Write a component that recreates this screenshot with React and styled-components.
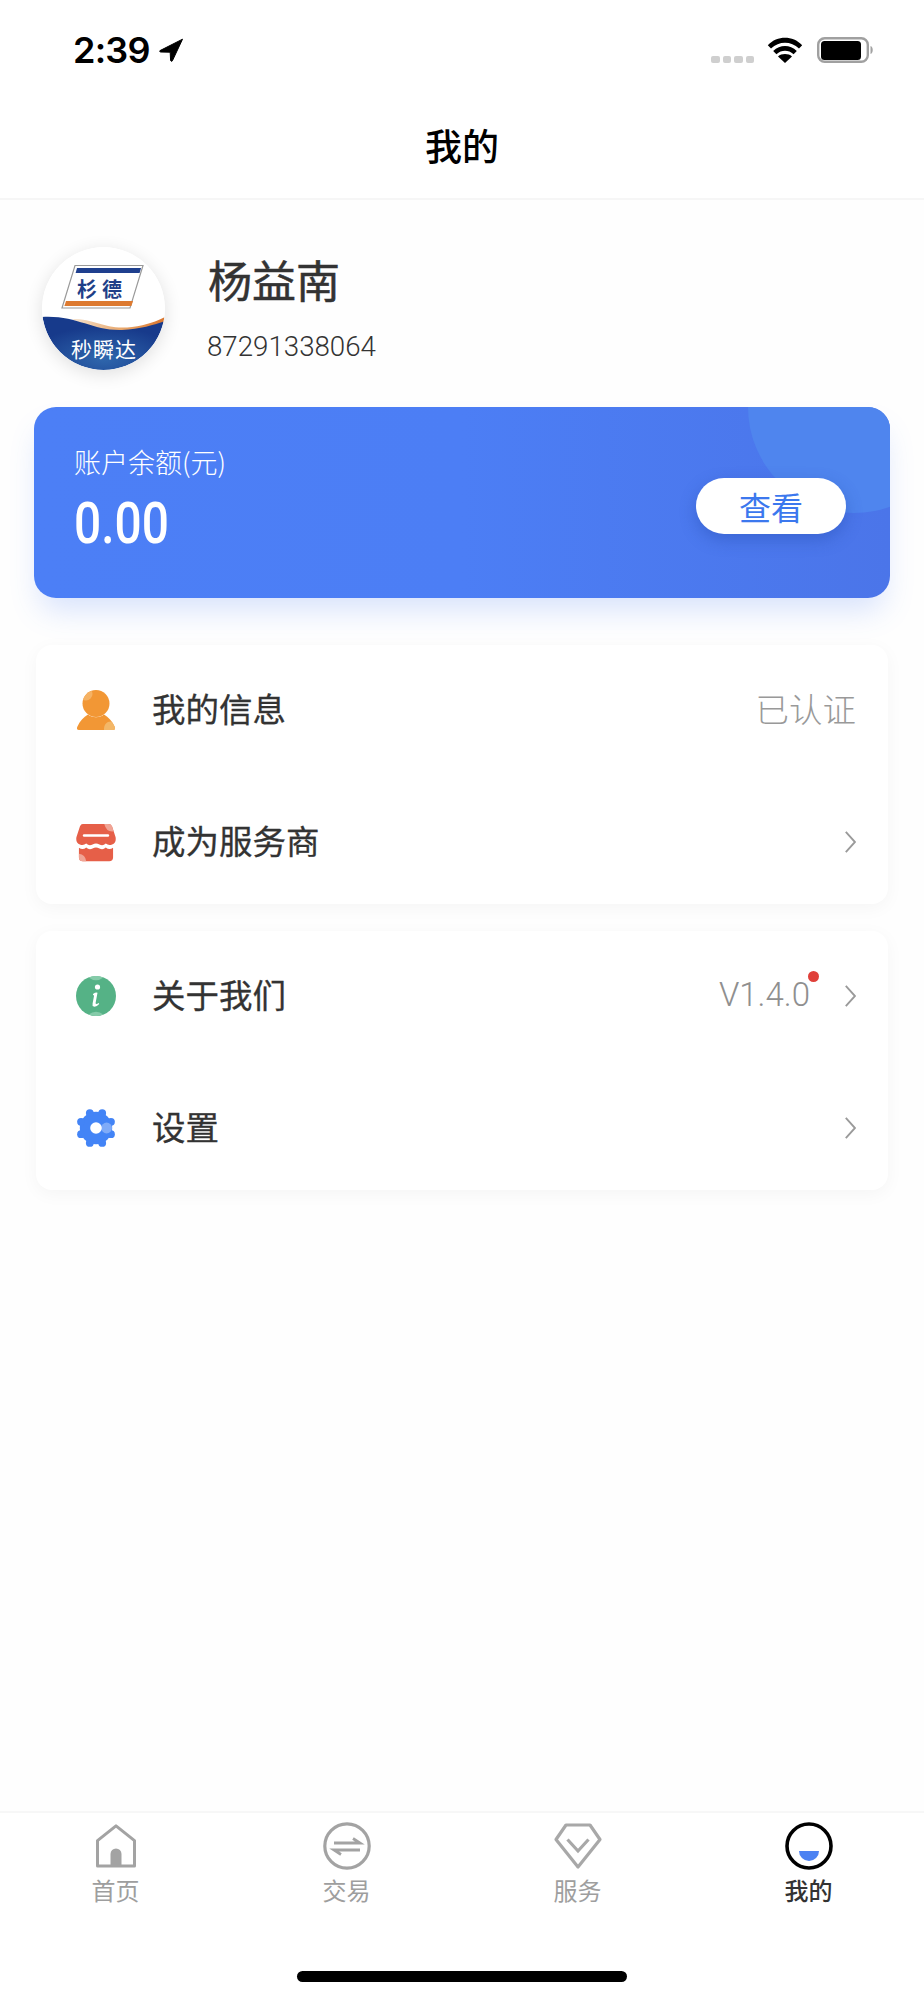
import React from "react";
import styled, { createGlobalStyle } from "styled-components";

const Global = createGlobalStyle`
  html, body { margin: 0; padding: 0; background: #fff; }
  * { box-sizing: border-box; }
  body { font-family: "Noto Sans CJK SC", "Noto Sans", sans-serif; }
`;

const CJK = `"Noto Sans CJK SC", "Noto Sans", sans-serif`;

const Page = styled.div`
  width: 924px;
  height: 2000px;
  display: flex;
  flex-direction: column;
  background: #fff;
  overflow: hidden;
`;
const StatusBar = styled.div`
  height: 94px;
  padding: 37px 49px 0 73px;
  display: flex;
  justify-content: space-between;
  align-items: flex-start;
`;
const TimeGroup = styled.div`
  display: flex;
  align-items: center;
  gap: 9px;
  height: 26px;
`;
const Time = styled.span`
  font-family: "Inter", sans-serif;
  font-weight: 600;
  font-size: 36px;
  line-height: 26px;
  letter-spacing: -0.8px;
  color: #000;
`;
const StatusIcons = styled.div`
  display: flex;
  align-items: flex-start;
`;
const SignalDots = styled.div`
  display: flex;
  gap: 3px;
  margin: 19px 13px 0 0;
`;
const SignalDot = styled.i`
  width: 8.5px;
  height: 7px;
  border-radius: 2px;
  background: #cfcfcf;
`;
const NavBar = styled.header`
  height: 106px;
  padding-bottom: 2px;
  display: flex;
  align-items: center;
  justify-content: center;
  border-bottom: 2px solid #f6f6f6;
  font-family: ${CJK};
  font-size: 37px;
  font-weight: 500;
  color: #000;
`;
const Main = styled.main`
  flex: 1;
  padding: 47px 34px 0;
  background: #fefefe;
`;
const Profile = styled.section`
  display: flex;
  align-items: center;
  gap: 43px;
  padding-left: 8px;
`;
const Avatar = styled.div`
  width: 123px;
  height: 123px;
  border-radius: 50%;
  background: #fff;
  box-shadow: 0 4px 18px rgba(0, 0, 0, 0.12);
  overflow: hidden;
  flex: none;
`;
const ProfileText = styled.div`
  display: flex;
  flex-direction: column;
  gap: 24px;
  padding-bottom: 3px;
`;
const Name = styled.div`
  font-family: ${CJK};
  font-size: 44px;
  line-height: 56px;
  font-weight: 400;
  color: #333;
  height: 56px;
  -webkit-text-stroke: 0.5px #333;
`;
const Phone = styled.div`
  font-family: "Roboto", sans-serif;
  font-size: 27.7px;
  line-height: 32px;
  font-weight: 300;
  color: #333;
  margin-left: -1px;
`;
const BalanceCard = styled.section`
  position: relative;
  margin-top: 37px;
  height: 191px;
  border-radius: 22px;
  padding: 38px 44px 0 40px;
  display: flex;
  justify-content: space-between;
  background: linear-gradient(90deg, #4c7ff6 0%, #4c7ef5 50%, #4b75e9 100%);
  box-shadow: 0 18px 30px -6px rgba(76, 126, 245, 0.22);
`;
const CardDecor = styled.div`
  position: absolute;
  inset: 0;
  border-radius: 22px;
  overflow: hidden;
  &::after {
    content: "";
    position: absolute;
    width: 212px;
    height: 212px;
    border-radius: 50%;
    left: 714px;
    top: -106px;
    background: #4f85ee;
  }
`;
const BalanceText = styled.div`
  position: relative;
  display: flex;
  flex-direction: column;
`;
const BalanceLabel = styled.div`
  font-family: ${CJK};
  font-size: 27px;
  line-height: 34px;
  font-weight: 300;
  color: #fff;
`;
const BalanceValue = styled.div`
  margin-top: 15px;
  font-family: "Roboto", sans-serif;
  font-size: 57px;
  line-height: 60px;
  font-weight: 500;
  color: #fff;
  transform: scaleX(0.84);
  transform-origin: left center;
`;
const ViewButton = styled.button`
  position: relative;
  align-self: flex-start;
  margin-top: 33px;
  width: 150px;
  height: 56px;
  border: 0;
  border-radius: 28px;
  padding: 0;
  background: #fff;
  color: #3c78ee;
  font-family: ${CJK};
  font-size: 32px;
  font-weight: 400;
  box-shadow: 0 6px 16px rgba(40, 80, 180, 0.45);
`;
const Group = styled.section`
  margin: ${(p) => p.$top}px 2px 0;
  display: flex;
  flex-direction: column;
  background: #fff;
  border-radius: 16px;
  box-shadow: 0 4px 18px rgba(0, 0, 0, 0.04);
`;
const Row = styled.div`
  height: ${(p) => (p.$last ? 129 : 130)}px;
  padding: ${(p) => (p.$last ? "5px" : "0")} 32px 0 40px;
  display: flex;
  align-items: center;
`;
const RowIcon = styled.div`
  width: 40px;
  height: 44px;
  display: flex;
  align-items: center;
  justify-content: center;
  flex: none;
`;
const RowLabel = styled.div`
  flex: 1;
  margin-left: 36px;
  padding-bottom: 5px;
  font-family: ${CJK};
  font-size: 33.5px;
  font-weight: 400;
  color: #333;
  -webkit-text-stroke: 0.3px #333;
`;
const RowValue = styled.div`
  font-family: ${CJK};
  font-size: 33.5px;
  font-weight: 300;
  padding-bottom: 5px;
  color: #999;
`;
const Version = styled.div`
  position: relative;
  margin-right: 35px;
  padding-bottom: 3px;
  font-family: "Roboto", sans-serif;
  font-size: 33px;
  font-weight: 300;
  color: #8f8f8f;
`;
const RedDot = styled.i`
  position: absolute;
  width: 11px;
  height: 11px;
  border-radius: 50%;
  background: #e0403a;
  right: -9px;
  top: -4px;
`;
const TabBar = styled.nav`
  height: 189px;
  flex: none;
  background: #fff;
  border-top: 2px solid #f7f7f7;
  padding-top: 9px;
  display: flex;
  flex-direction: column;
  align-items: center;
`;
const Tabs = styled.div`
  width: 100%;
  display: grid;
  grid-template-columns: repeat(4, 1fr);
`;
const Tab = styled.div`
  display: flex;
  flex-direction: column;
  align-items: center;
  gap: 5px;
  font-family: ${CJK};
  font-size: 24px;
  line-height: 30px;
  font-weight: ${(p) => (p.$active ? 500 : 400)};
  color: ${(p) => (p.$active ? "#333" : "#9e9e9e")};
`;
const HomeBar = styled.div`
  width: 330px;
  height: 11px;
  margin-top: 66px;
  border-radius: 6px;
  background: #000;
`;

const LocationIcon = () => (
  <svg width="24" height="24" viewBox="0 0 24 24">
    <path d="M23.5 1.2 L1 12.6 Q0 13.6 1.6 14 L11.2 14.2 L11.6 22.6 Q12.4 24 13.4 22.8 Z" fill="#000" stroke="#000" strokeWidth="1" strokeLinejoin="round" />
  </svg>
);
const WifiIcon = () => (
  <svg width="36" height="26" viewBox="0 0 36 26" style={{ marginRight: 14 }}>
    <path d="M0.8 8.2 C10.5 -1.6 25.5 -1.6 35.2 8.2 L32 11.6 C24 3.8 12 3.8 4 11.6 Z" fill="#000" />
    <path d="M6.2 14 C13 7.4 23 7.4 29.8 14 L26.6 17.2 C21.4 12.6 14.6 12.6 9.4 17.2 Z" fill="#000" />
    <path d="M18 26 L11 19.4 C14.6 16.2 21.4 16.2 25 19.4 Z" fill="#000" />
  </svg>
);
const BatteryIcon = () => (
  <svg width="58" height="26" viewBox="0 0 58 26">
    <rect x="1.2" y="1.2" width="49.6" height="23.6" rx="6.5" fill="none" stroke="#a0a0a0" strokeWidth="2.4" />
    <rect x="4" y="4" width="40" height="19" rx="3.5" fill="#000" />
    <path d="M53.5 9 C56.5 10 56.5 16 53.5 17 Z" fill="#a2a2a2" />
  </svg>
);

const LogoAvatar = () => (
  <svg width="123" height="123" viewBox="0 0 123 123">
    <defs>
      <radialGradient id="wave" cx="50%" cy="78%" r="60%">
        <stop offset="0%" stopColor="#2f67ad" />
        <stop offset="100%" stopColor="#173a8b" />
      </radialGradient>
      <linearGradient id="stripe" x1="0" x2="1">
        <stop offset="0%" stopColor="#f5e3cf" />
        <stop offset="55%" stopColor="#e8a568" />
        <stop offset="100%" stopColor="#d9752d" />
      </linearGradient>
      <clipPath id="disc">
        <circle cx="61.5" cy="61.5" r="61.5" />
      </clipPath>
    </defs>
    <g clipPath="url(#disc)">
      <rect width="123" height="123" fill="#fff" />
      <path d="M33 18.5 H101 L88 61 H20 Z" fill="#fff" stroke="#9a9a9a" strokeWidth="1.2" />
      <path d="M35 21 H99 L97.6 26 H33.6 Z" fill="#1f3f8e" />
      <path d="M24 54 H91 L89.4 59 H22.4 Z" fill="#dd7a30" />
      <text x="60" y="50" textAnchor="middle" fontFamily={CJK} fontSize="20" fontWeight="700" letterSpacing="5" fill="#1f3f88">杉德</text>
      <path d="M30 72 C55 72 62 83 90 80 C105 78 115 74 123 70 V76 C100 88 60 90 30 72 Z" fill="url(#stripe)" />
      <path d="M0 70 C35 68 50 84 80 83 C98 82 112 78 123 74 V123 H0 Z" fill="url(#wave)" />
      <text x="62" y="110" textAnchor="middle" fontFamily={CJK} fontSize="21" fontWeight="400" letterSpacing="1" fill="#fff">秒瞬达</text>
    </g>
  </svg>
);

const PersonIcon = () => (
  <svg width="40" height="42" viewBox="0 0 40 42">
    <defs>
      <clipPath id="head">
        <circle cx="20" cy="14.5" r="13.5" />
      </clipPath>
    </defs>
    <circle cx="20" cy="14.5" r="13.5" fill="#f29735" />
    <circle cx="10" cy="5" r="6.5" fill="#f5b264" clipPath="url(#head)" />
    <path d="M1.2 38 C4 32 7.5 28 12 25.5 C16 29 24 29 28 25.5 C32.5 28 36 32 38.8 38 Q39.8 41 37 41 H3 Q0.2 41 1.2 38 Z" fill="#f29735" />
    <path d="M28 41 C27.5 35.5 31.5 32 35.4 32.6 C36.8 34.2 38 36 38.8 38 Q39.8 41 37 41 Z" fill="#f3b768" />
  </svg>
);
const StoreIcon = () => (
  <svg width="41" height="39" viewBox="0 0 41 39">
    <path d="M7 0.5 H33 Q36 0.5 37 3 L40.6 14 Q41.5 20 37 21.5 Q33.5 23 30.5 20.6 Q27.5 23.6 24 21.6 Q20.5 19.6 17 21.6 Q13.5 23.6 10.5 20.6 Q7.5 23 4 21.5 Q-0.5 20 0.4 14 L4 3 Q5 0.5 7 0.5 Z" fill="#e65f48" />
    <path d="M29 0.5 H33 Q36 0.5 37 3 L38.6 8 Q31 9 29 0.5 Z" fill="#f0a495" />
    <rect x="7" y="11" width="27" height="2.6" rx="1.3" fill="#fff" />
    <path d="M3 25 Q7 27.6 10.5 24.6 Q13.5 27.6 17 25.6 Q20.5 23.6 24 25.6 Q27.5 27.6 30.5 24.6 Q34 27.6 38 25 V35 Q38 38.8 34 38.8 H7 Q3 38.8 3 35 Z" fill="#e65f48" />
    <path d="M3 31 Q9.5 31.5 10.5 38.8 H7 Q3 38.8 3 35 Z" fill="#f0a495" />
  </svg>
);
const InfoIcon = () => (
  <svg width="40" height="40" viewBox="0 0 40 40">
    <circle cx="20" cy="20" r="20" fill="#55b286" />
    <path d="M12.5 1.5 A20 20 0 0 1 27.5 1.5 Q20 7 12.5 1.5 Z" fill="#85cba9" />
    <path d="M12.5 38.5 A20 20 0 0 0 27.5 38.5 Q20 33 12.5 38.5 Z" fill="#85cba9" />
    <circle cx="21.5" cy="11" r="2.6" fill="#fff" />
    <path d="M17 18 Q20 16 21.5 16.8 L19.6 27 Q19.6 29 22.8 27 L23.2 28 Q20.6 31 17.8 30.6 Q16 30 16.6 27.4 L18 20 Q17.8 18.8 17 19 Z" fill="#fff" />
  </svg>
);
const GearIcon = () => (
  <svg width="40" height="40" viewBox="0 0 40 40">
    <circle cx="20" cy="20" r="16.2" fill="#4384f6" />
    {[22.5, 67.5, 112.5, 157.5, 202.5, 247.5, 292.5, 337.5].map((a) => (
      <circle
        key={a}
        cx={20 + 16.2 * Math.cos((a * Math.PI) / 180)}
        cy={20 + 16.2 * Math.sin((a * Math.PI) / 180)}
        r="3.9"
        fill="#4384f6"
      />
    ))}
    <circle cx="30.6" cy="20" r="5.4" fill="#7fabf8" />
    <circle cx="20" cy="20" r="5.8" fill="#fff" />
  </svg>
);
const Chevron = () => (
  <svg width="11" height="22" viewBox="0 0 11 22">
    <path d="M0.8 0.8 L10 11 L0.8 21.2" fill="none" stroke="#9a9a9a" strokeWidth="1.9" />
  </svg>
);

const HomeTab = () => (
  <svg width="48" height="48" viewBox="0 0 48 48">
    <path d="M24 3.8 L42.5 18.6 V44 H5.5 V18.6 Z" fill="none" stroke="#a3a3a3" strokeWidth="3" strokeLinejoin="round" />
    <path d="M18.5 44 V32 A5.5 5.5 0 0 1 29.5 32 V44 Z" fill="#a3a3a3" />
  </svg>
);
const TradeTab = () => (
  <svg width="48" height="48" viewBox="0 0 48 48">
    <circle cx="24" cy="24" r="22.2" fill="none" stroke="#a3a3a3" strokeWidth="3.2" />
    <path d="M11 21 H37 L30 16.5" fill="none" stroke="#a3a3a3" strokeWidth="2.8" />
    <path d="M37 28 H11 L18 32.5" fill="none" stroke="#a3a3a3" strokeWidth="2.8" />
  </svg>
);
const ServiceTab = () => (
  <svg width="48" height="48" viewBox="0 0 48 48">
    <path d="M12 3 H36 L46 17.5 L24 45 L2 17.5 Z" fill="none" stroke="#a8a8a8" strokeWidth="3.2" strokeLinejoin="round" />
    <path d="M13.5 17.5 L24 29 L34.5 17.5" fill="none" stroke="#a8a8a8" strokeWidth="3.2" />
  </svg>
);
const MeTab = () => (
  <svg width="48" height="48" viewBox="0 0 48 48">
    <circle cx="24" cy="24" r="22" fill="none" stroke="#000" strokeWidth="3.6" />
    <path d="M14 29 H34 A10 10 0 0 1 14 29 Z" fill="#4c82f2" />
  </svg>
);

export default function App() {
  return (
    <Page>
      <Global />
      <StatusBar>
        <TimeGroup>
          <Time>2:39</Time>
          <LocationIcon />
        </TimeGroup>
        <StatusIcons>
          <SignalDots>
            <SignalDot />
            <SignalDot />
            <SignalDot />
            <SignalDot />
          </SignalDots>
          <WifiIcon />
          <BatteryIcon />
        </StatusIcons>
      </StatusBar>
      <NavBar>我的</NavBar>
      <Main>
        <Profile>
          <Avatar>
            <LogoAvatar />
          </Avatar>
          <ProfileText>
            <Name>杨益南</Name>
            <Phone>87291338064</Phone>
          </ProfileText>
        </Profile>
        <BalanceCard>
          <CardDecor />
          <BalanceText>
            <BalanceLabel>账户余额(元)</BalanceLabel>
            <BalanceValue>0.00</BalanceValue>
          </BalanceText>
          <ViewButton>查看</ViewButton>
        </BalanceCard>
        <Group $top={47}>
          <Row>
            <RowIcon><PersonIcon /></RowIcon>
            <RowLabel>我的信息</RowLabel>
            <RowValue>已认证</RowValue>
          </Row>
          <Row $last>
            <RowIcon><StoreIcon /></RowIcon>
            <RowLabel>成为服务商</RowLabel>
            <Chevron />
          </Row>
        </Group>
        <Group $top={27}>
          <Row>
            <RowIcon><InfoIcon /></RowIcon>
            <RowLabel>关于我们</RowLabel>
            <Version>
              V1.4.0
              <RedDot />
            </Version>
            <Chevron />
          </Row>
          <Row $last>
            <RowIcon><GearIcon /></RowIcon>
            <RowLabel>设置</RowLabel>
            <Chevron />
          </Row>
        </Group>
      </Main>
      <TabBar>
        <Tabs>
          <Tab><HomeTab />首页</Tab>
          <Tab><TradeTab />交易</Tab>
          <Tab><ServiceTab />服务</Tab>
          <Tab $active><MeTab />我的</Tab>
        </Tabs>
        <HomeBar />
      </TabBar>
    </Page>
  );
}
